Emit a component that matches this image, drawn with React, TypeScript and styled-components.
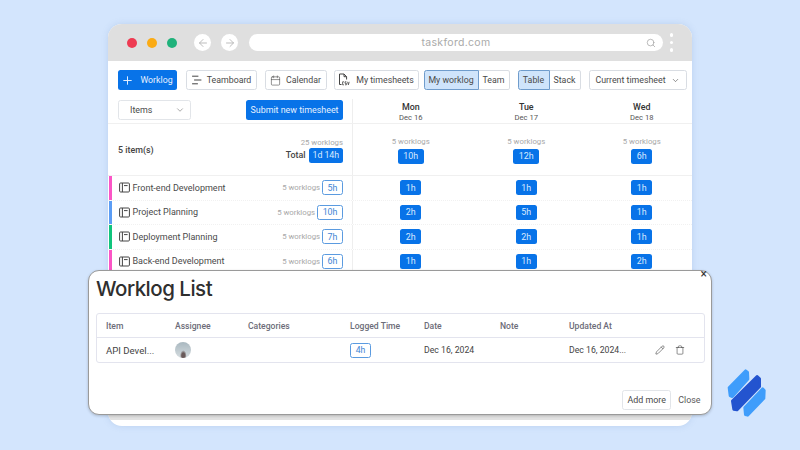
import styled, { createGlobalStyle } from 'styled-components';
import { ArrowLeft, ArrowRight, Calendar, ChevronDown, Pencil, Plus, Search, Trash } from 'lucide-react';

const GlobalStyle = createGlobalStyle`
  html, body {
    margin: 0;
    padding: 0;
    background: #d3e5fd;
  }
  * {
    box-sizing: border-box;
  }
`;

const rows = [
  { name: 'Front-end Development', color: '#fb55c6', total: '5h', hours: ['1h', '1h', '1h'] },
  { name: 'Project Planning', color: '#5b9df5', total: '10h', hours: ['2h', '5h', '1h'] },
  { name: 'Deployment Planning', color: '#10c47c', total: '7h', hours: ['2h', '2h', '1h'] },
  { name: 'Back-end Development', color: '#fb55c6', total: '6h', hours: ['1h', '1h', '2h'] },
];

const days = [
  { day: 'Mon', date: 'Dec 16', total: '10h' },
  { day: 'Tue', date: 'Dec 17', total: '12h' },
  { day: 'Wed', date: 'Dec 18', total: '6h' },
];

function TeamboardIcon() {
  return (
    <svg width="11" height="10" viewBox="0 0 11 10" fill="none" stroke="#444" strokeWidth="1" strokeLinecap="round">
      <path d="M1.5 1.2H7M3.5 5H10M1.5 8.8H6.5" />
    </svg>
  );
}

function SheetIcon() {
  return (
    <svg width="13" height="14" viewBox="0 0 13 14" fill="none" stroke="#444" strokeWidth="1" strokeLinejoin="round">
      <path d="M6 1H1.5v10.5H3.5M6 1l2.6 2.7V6.5M6 1v2.7h2.6" />
      <path d="M6 8.8H4.6v3H6M8.4 8.8H7v1.5h1.4v1.5H7M9.6 8.8l.8 3 .8-3" strokeWidth=".8" />
    </svg>
  );
}

function ItemIcon() {
  return (
    <svg width="11" height="11" viewBox="0 0 11 11" fill="none" stroke="#444" strokeWidth="1">
      <rect x=".6" y="1" width="9.8" height="9" rx="1" />
      <path d="M3.4 1v9M5 3.6h3.6" />
    </svg>
  );
}

function Logo() {
  return (
    <LogoMark width="70" height="90" viewBox="0 0 210 270" strokeLinejoin="round" strokeWidth="8">
      <polygon points="92,122 98,127 99,147 52,200 45,197 42,173" fill="#3f9dfb" stroke="#3f9dfb" />
      <polygon points="126,139 134,146 134,170 66,240 56,238 52,213" fill="#2354cf" stroke="#2354cf" />
      <polygon points="143,176 148,181 147,205 98,256 91,254 89,233" fill="#3f9dfb" stroke="#3f9dfb" />
    </LogoMark>
  );
}

export default function App() {
  return (
    <Page>
      <GlobalStyle />
      <Browser>
        <TitleBar>
          <Dot $color="#ee3b52" />
          <Dot $color="#fbab14" />
          <Dot $color="#1fb27b" />
          <NavButton $first>
            <ArrowLeft size={12} strokeWidth={1.8} />
          </NavButton>
          <NavButton>
            <ArrowRight size={12} strokeWidth={1.8} />
          </NavButton>
          <AddressBar>
            <AddressText>taskford.com</AddressText>
            <AddressSearch>
              <Search size={10} strokeWidth={1.8} />
            </AddressSearch>
          </AddressBar>
          <Kebab>
            <span />
            <span />
            <span />
          </Kebab>
        </TitleBar>

        <Content>
          <Toolbar>
            <PrimaryButton $w={59}>
              <Plus size={13} strokeWidth={1.8} />
              Worklog
            </PrimaryButton>
            <ToolButton $w={71} $ml={9}>
              <TeamboardIcon />
              Teamboard
            </ToolButton>
            <ToolButton $w={62} $ml={8}>
              <Calendar size={11} strokeWidth={1.3} />
              Calendar
            </ToolButton>
            <ToolButton $w={85} $ml={7}>
              <SheetIcon />
              My timesheets
            </ToolButton>
            <Segment $ml={5}>
              <SegmentItem $w={55} $active>My worklog</SegmentItem>
              <SegmentItem $w={31}>Team</SegmentItem>
            </Segment>
            <Segment $ml={8}>
              <SegmentItem $w={32} $active>Table</SegmentItem>
              <SegmentItem $w={31}>Stack</SegmentItem>
            </Segment>
            <ToolButton $w={98} $ml={8}>
              Current timesheet
              <ChevronDown size={9} strokeWidth={1.6} />
            </ToolButton>
          </Toolbar>

          <HeaderRow>
            <LeftCell>
              <ItemsSelect>
                Items
                <ChevronDown size={10} strokeWidth={1.5} />
              </ItemsSelect>
              <SubmitButton>Submit new timesheet</SubmitButton>
            </LeftCell>
            {days.map((d) => (
              <DayCell key={d.day}>
                <DayName>{d.day}</DayName>
                <DayDate>{d.date}</DayDate>
              </DayCell>
            ))}
          </HeaderRow>

          <SummaryRow>
            <LeftCell>
              <ItemCount>5 item(s)</ItemCount>
              <SummaryTotal>
                <Muted>25 worklogs</Muted>
                <TotalLine>
                  Total
                  <TotalBadge>1d 14h</TotalBadge>
                </TotalLine>
              </SummaryTotal>
            </LeftCell>
            {days.map((d) => (
              <SummaryCell key={d.day}>
                <Muted>5 worklogs</Muted>
                <HourBadge>{d.total}</HourBadge>
              </SummaryCell>
            ))}
          </SummaryRow>

          {rows.map((r) => (
            <ItemRow key={r.name}>
              <ItemLeft $color={r.color}>
                <ItemIcon />
                <ItemName>{r.name}</ItemName>
                <Muted>5 worklogs</Muted>
                <OutlineBadge>{r.total}</OutlineBadge>
              </ItemLeft>
              {r.hours.map((h, i) => (
                <HourCell key={i}>
                  <HourBadge>{h}</HourBadge>
                </HourCell>
              ))}
            </ItemRow>
          ))}
        </Content>
        <BottomStrip />
      </Browser>

      <Modal>
        <CloseMark>×</CloseMark>
        <ModalTitle>Worklog List</ModalTitle>
        <ListTable>
          <ListHead>
            <span>Item</span>
            <span>Assignee</span>
            <span>Categories</span>
            <span>Logged Time</span>
            <span>Date</span>
            <span>Note</span>
            <span>Updated At</span>
            <span />
          </ListHead>
          <ListRow>
            <ItemTitle>API Devel...</ItemTitle>
            <Avatar />
            <span />
            <span>
              <LoggedBadge>4h</LoggedBadge>
            </span>
            <span>Dec 16, 2024</span>
            <span />
            <span>Dec 16, 2024...</span>
            <RowActions>
              <Pencil size={10} strokeWidth={1.3} />
              <Trash size={10} strokeWidth={1.3} />
            </RowActions>
          </ListRow>
        </ListTable>
        <ModalFooter>
          <AddMore>Add more</AddMore>
          <CloseText>Close</CloseText>
        </ModalFooter>
      </Modal>

      <Logo />
    </Page>
  );
}

const Page = styled.div`
  position: relative;
  width: 800px;
  height: 450px;
  padding: 24px 108px;
  overflow: hidden;
  background: #d3e5fd;
  font-family: Roboto, 'Liberation Sans', sans-serif;
  color: #3b3b3b;
`;

const Browser = styled.div`
  display: flex;
  flex-direction: column;
  width: 584px;
  height: 402px;
  border-radius: 14px;
  overflow: hidden;
  background: #fff;
  box-shadow: 0 0 6px rgba(120, 150, 200, 0.25);
`;

const TitleBar = styled.div`
  display: flex;
  align-items: center;
  flex: none;
  height: 37px;
  padding: 0 0 0 19px;
  background: #dfdfdf;
`;

const Dot = styled.span<{ $color: string }>`
  width: 10px;
  height: 10px;
  margin-right: 10px;
  border-radius: 50%;
  background: ${(p) => p.$color};
`;

const NavButton = styled.span<{ $first?: boolean }>`
  display: flex;
  align-items: center;
  justify-content: center;
  width: 17px;
  height: 17px;
  margin-left: ${(p) => (p.$first ? '7px' : '0')};
  margin-right: 10px;
  border-radius: 50%;
  background: #fff;
  color: #b5b5b5;
`;

const AddressBar = styled.div`
  position: relative;
  display: flex;
  align-items: center;
  justify-content: center;
  width: 414px;
  height: 17px;
  margin-left: 1px;
  border-radius: 9px;
  background: #fff;
`;

const AddressText = styled.span`
  font-family: Inter, sans-serif;
  font-size: 10.5px;
  letter-spacing: 0.3px;
  color: #aaa;
`;

const AddressSearch = styled.span`
  position: absolute;
  right: 7px;
  top: 0;
  bottom: 0;
  display: flex;
  align-items: center;
  color: #a5a5a5;
`;

const Kebab = styled.div`
  display: flex;
  flex-direction: column;
  gap: 4px;
  margin-left: 6.5px;

  span {
    width: 3.5px;
    height: 3.5px;
    border-radius: 50%;
    background: #fff;
  }
`;

const Content = styled.div`
  flex: 1;
  min-height: 0;
  overflow: hidden;
`;

const BottomStrip = styled.div`
  flex: none;
  height: 5px;
  margin-bottom: 6px;
  background: #e2e2e2;
`;

const Toolbar = styled.div`
  display: flex;
  align-items: center;
  height: 20px;
  margin: 9px 0 9px 9.5px;
`;

const PrimaryButton = styled.div<{ $w: number }>`
  display: flex;
  align-items: center;
  justify-content: center;
  gap: 6px;
  flex: none;
  width: ${(p) => p.$w}px;
  height: 20px;
  border-radius: 2.5px;
  background: #0873e8;
  color: #e6f1ff;
  font-size: 8.8px;
  white-space: nowrap;
`;

const ToolButton = styled.div<{ $w: number; $ml: number }>`
  display: flex;
  align-items: center;
  justify-content: center;
  gap: 5px;
  flex: none;
  width: ${(p) => p.$w}px;
  height: 20px;
  margin-left: ${(p) => p.$ml}px;
  border: 1px solid #d9dde3;
  border-radius: 2.5px;
  background: #fff;
  color: #4a4a4a;
  font-size: 8.8px;
  white-space: nowrap;
`;

const Segment = styled.div<{ $ml: number }>`
  display: flex;
  flex: none;
  height: 20px;
  margin-left: ${(p) => p.$ml}px;
`;

const SegmentItem = styled.div<{ $w: number; $active?: boolean }>`
  display: flex;
  align-items: center;
  justify-content: center;
  width: ${(p) => p.$w}px;
  border: 1px solid ${(p) => (p.$active ? '#6f9ccc' : '#d9dde3')};
  border-left-width: ${(p) => (p.$active ? '1px' : '0')};
  border-radius: ${(p) => (p.$active ? '2.5px 0 0 2.5px' : '0 2.5px 2.5px 0')};
  background: ${(p) => (p.$active ? '#cfe4fb' : '#fff')};
  color: #4a4a4a;
  font-size: 8.8px;
  white-space: nowrap;
`;

const gridColumns = '245px repeat(3, 115.5px)';

const HeaderRow = styled.div`
  display: grid;
  grid-template-columns: ${gridColumns};
  height: 25px;
  border-bottom: 1px solid #f0f0f0;
`;

const LeftCell = styled.div`
  display: flex;
  align-items: center;
  justify-content: space-between;
  padding: 0 9px 0 10px;
  border-right: 1px solid #eeeeee;
`;

const ItemsSelect = styled.div`
  display: flex;
  align-items: center;
  justify-content: space-between;
  width: 73px;
  height: 20px;
  margin-top: -2px;
  padding: 0 5px 0 11px;
  border: 1px solid #e2e5e9;
  border-radius: 2.5px;
  font-size: 8.9px;
  color: #4a4a4a;

  svg {
    color: #777;
  }
`;

const SubmitButton = styled.div`
  display: flex;
  align-items: center;
  justify-content: center;
  width: 97px;
  height: 20px;
  margin-top: -2px;
  border-radius: 2.5px;
  background: #0873e8;
  color: #e6f1ff;
  font-size: 8.9px;
  white-space: nowrap;
`;

const DayCell = styled.div`
  display: flex;
  flex-direction: column;
  align-items: center;
  padding-top: 2px;
`;

const DayName = styled.span`
  font-size: 8.9px;
  font-weight: 500;
  line-height: 12px;
  color: #333;
`;

const DayDate = styled.span`
  font-size: 7.6px;
  line-height: 10px;
  color: #555;
`;

const SummaryRow = styled.div`
  display: grid;
  grid-template-columns: ${gridColumns};
  height: 52px;
  border-bottom: 1px solid #f0f0f0;
`;

const ItemCount = styled.span`
  font-size: 8.9px;
  font-weight: 500;
  color: #444;
`;

const SummaryTotal = styled.div`
  display: flex;
  flex-direction: column;
  align-items: flex-end;
`;

const TotalLine = styled.div`
  display: flex;
  align-items: center;
  gap: 3px;
  font-size: 8.9px;
  font-weight: 500;
  color: #444;
`;

const SummaryCell = styled.div`
  display: flex;
  flex-direction: column;
  align-items: center;
  justify-content: center;
  gap: 2px;
`;

const Muted = styled.span`
  font-size: 7.8px;
  line-height: 11px;
  color: #a8a8a8;
  white-space: nowrap;
`;

const HourBadge = styled.span`
  display: inline-flex;
  align-items: center;
  justify-content: center;
  height: 15px;
  padding: 0 5.5px;
  border-radius: 2.5px;
  background: #0873e8;
  color: #d9eaff;
  font-size: 8.9px;
  font-weight: 400;
`;

const TotalBadge = styled(HourBadge)`
  padding: 0 4px;
  letter-spacing: -0.1px;
`;

const ItemRow = styled.div`
  display: grid;
  grid-template-columns: ${gridColumns};
  height: 24.5px;
  border-bottom: 1px dotted #f1f1f1;
`;

const ItemLeft = styled.div<{ $color: string }>`
  display: flex;
  align-items: center;
  margin-left: 1px;
  padding: 0 9px 0 7px;
  border-left: 3px solid ${(p) => p.$color};
  border-right: 1px solid #eeeeee;
`;

const ItemName = styled.span`
  flex: 1;
  margin-left: 2.5px;
  font-size: 9px;
  color: #4a4a4a;
  white-space: nowrap;
`;

const OutlineBadge = styled.span`
  display: inline-flex;
  align-items: center;
  justify-content: center;
  height: 15px;
  margin-left: 2px;
  padding: 0 4.5px;
  border: 1px solid #5b9be0;
  border-radius: 2.5px;
  color: #3f86d4;
  font-size: 8.9px;
`;

const HourCell = styled.div`
  display: flex;
  align-items: center;
  justify-content: center;
`;

const Modal = styled.div`
  position: absolute;
  left: 88px;
  top: 270px;
  width: 624px;
  height: 145px;
  display: flex;
  flex-direction: column;
  padding: 0 7px 4px 7px;
  border: 1px solid #9a9a9a;
  border-radius: 11px;
  background: #fff;
  box-shadow: 0 1px 3px rgba(0, 0, 0, 0.2);
`;

const CloseMark = styled.span`
  position: absolute;
  right: 4px;
  top: -3px;
  font-size: 12px;
  line-height: 12px;
  color: #333;
`;

const ModalTitle = styled.div`
  height: 42px;
  font-family: Inter, sans-serif;
  font-size: 20.5px;
  font-weight: 500;
  letter-spacing: -0.5px;
  line-height: 35px;
  color: #2f2f2f;
`;

const listColumns = '69px 73px 102px 74px 76px 69px 78px 1fr';

const ListTable = styled.div`
  margin-right: -0.5px;
  border: 1px solid #e3e4ee;
  border-radius: 3px;
`;

const ListHead = styled.div`
  display: grid;
  grid-template-columns: ${listColumns};
  align-items: center;
  height: 24px;
  padding-left: 9px;
  border-bottom: 1px solid #e3e4ee;
  font-size: 8.6px;
  font-weight: 500;
  color: #6c6c78;
`;

const ListRow = styled.div`
  display: grid;
  grid-template-columns: ${listColumns};
  align-items: center;
  height: 24px;
  padding-left: 9px;
  font-size: 8.7px;
  color: #444;
  white-space: nowrap;
`;

const ItemTitle = styled.span`
  font-size: 9.6px;
`;

const Avatar = styled.span`
  width: 16px;
  height: 16px;
  border-radius: 50%;
  background:
    radial-gradient(ellipse at 52% 85%, #6a5a5a 0 14%, transparent 28%),
    linear-gradient(#a9b8c0, #d6dde0);
`;

const LoggedBadge = styled.span`
  display: inline-flex;
  align-items: center;
  justify-content: center;
  width: 21px;
  height: 15px;
  border: 1px solid #5b9be0;
  border-radius: 2.5px;
  color: #3f86d4;
  font-size: 8.7px;
`;

const RowActions = styled.span`
  display: flex;
  align-items: center;
  gap: 10px;
  padding-left: 8px;
  color: #333;
`;

const ModalFooter = styled.div`
  display: flex;
  align-items: center;
  justify-content: flex-end;
  gap: 7px;
  margin-top: auto;
  padding-right: 3.5px;
`;

const AddMore = styled.div`
  display: flex;
  align-items: center;
  justify-content: center;
  width: 49px;
  height: 20px;
  border: 1px solid #e2e5e9;
  border-radius: 2.5px;
  font-size: 8.9px;
  color: #4a4a4a;
  white-space: nowrap;
`;

const CloseText = styled.span`
  font-size: 8.9px;
  color: #5a5a5a;
`;

const LogoMark = styled.svg`
  position: absolute;
  left: 715px;
  top: 330px;
`;
